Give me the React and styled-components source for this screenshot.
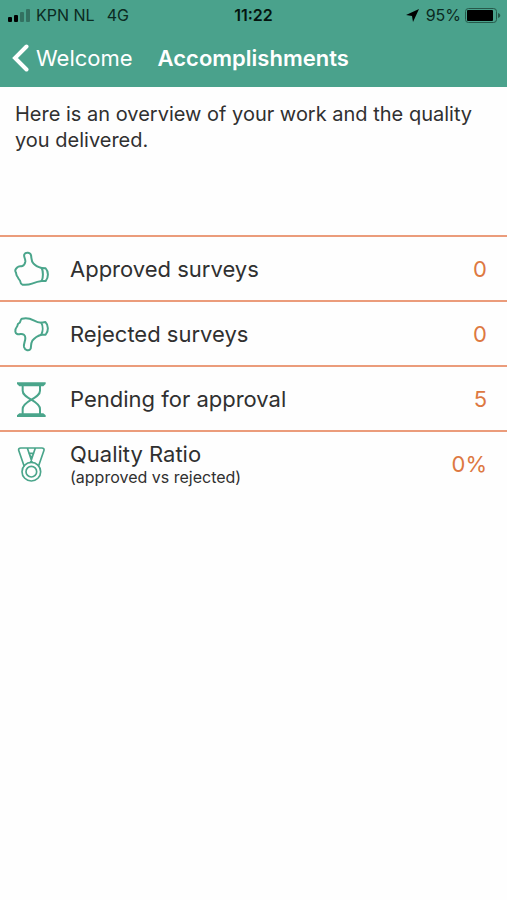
import React from 'react';
import styled, { createGlobalStyle } from 'styled-components';

const GlobalStyle = createGlobalStyle`
  *, *::before, *::after {
    box-sizing: border-box;
  }
  body {
    margin: 0;
    background: #fefefe;
    color: #303030;
    font-family: Inter, "Liberation Sans", sans-serif;
  }
`;

const ThumbUpIcon = () => (
  <Icon viewBox="0 0 108 108" aria-hidden="true">
    <path d="M86 51 C75 48 66 43 61 37 C54 29 56 21 54 13 C53 4 38 2 34 10 C31 17 38 23 37 32 C36 39 34 43 28 45 C22 47 17 45 13 49 C7 53 5 60 9 65 C10 70 10 75 14 78 C16 83 18 86 21 89 C22 95 23 99 28 101 C39 102 49 101 57 98 C67 94 76 91 86 90" />
    <path d="M86 51 C91 61 91 80 86 90 L98 90 C107 80 107 61 98 52 Z" />
  </Icon>
);

const ThumbDownIcon = () => (
  <Icon viewBox="0 0 108 108" aria-hidden="true">
    <path d="M85 20 C76 20 69 17 62 13 C51 7 39 5 27 8 C22 10 23 16 20 20 C16 22 13 25 13 30 C9 35 6 41 7 47 C8 54 15 56 22 54 C31 53 37 57 37 66 C37 76 31 84 33 93 C36 104 49 106 53 98 C55 90 53 82 58 74 C65 65 74 59 85 56" />
    <path d="M85 20 C90 30 90 46 85 56 L98 56 C107 47 107 27 97 18 Z" />
  </Icon>
);

const HourglassIcon = () => (
  <Icon viewBox="0 0 108 108" aria-hidden="true">
    <path d="M29 16 V29 C29 40 38 46 55 56 C72 66 81 73 81 84 V98 M81 16 V29 C81 40 72 46 55 56 C38 66 29 73 29 84 V98" />
    <path fill="currentColor" stroke="none" d="M12 4 H98 V9 L91 16 H19 L12 9 Z M19 97 H91 L98 103 V108 H12 V103 Z" />
  </Icon>
);

const MedalIcon = () => (
  <Icon $thin viewBox="0 0 108 108" aria-hidden="true">
    <circle cx="55" cy="77" r="28" />
    <circle cx="55" cy="77" r="16" />
    <path d="M33 59 L17 13 C16 9 19 6 23 6 H87 C91 6 94 9 93 13 L77 59 M43 6 L57 48 M67 6 L53 48 M48 22 H62 L55 36 Z" />
  </Icon>
);

const stats = [
  { label: 'Approved surveys', value: '0', Symbol: ThumbUpIcon },
  { label: 'Rejected surveys', value: '0', Symbol: ThumbDownIcon },
  { label: 'Pending for approval', value: '5', Symbol: HourglassIcon },
  {
    label: 'Quality Ratio',
    note: '(approved vs rejected)',
    value: '0%',
    Symbol: MedalIcon,
  },
];

const StatusBar = () => (
  <StatusWrapper>
    <Carrier>
      <SignalIcon viewBox="0 0 24 13" aria-hidden="true">
        <rect x="0" y="8" width="4" height="5" rx="1" />
        <rect x="6" y="6" width="4" height="7" rx="1" />
        <rect x="12" y="3" width="4" height="10" rx="1" opacity="0.3" />
        <rect x="18" y="0" width="4" height="13" rx="1" opacity="0.3" />
      </SignalIcon>
      <span>KPN NL</span>
      <Network>4G</Network>
    </Carrier>
    <Clock>11:22</Clock>
    <Power>
      <LocationIcon viewBox="0 0 13 13" aria-hidden="true">
        <path d="M13 0 L7 13 L6 7 L0 6 Z" />
      </LocationIcon>
      <span>95%</span>
      <BatteryIcon viewBox="0 0 36 15" aria-hidden="true">
        <rect x="0.5" y="0.5" width="31" height="14" rx="3" fill="none" stroke="#26594a" />
        <rect x="2" y="2" width="26" height="11" rx="1" />
        <path d="M33 5 C36 6 36 9 33 10 Z" fill="#26594a" />
      </BatteryIcon>
    </Power>
  </StatusWrapper>
);

const App = () => (
  <>
    <GlobalStyle />
    <Header>
      <StatusBar />
      <Navbar>
        <BackLink href="#welcome">
          <BackIcon viewBox="0 0 17 28" aria-hidden="true">
            <path d="M14.5 2.5 L3 14 L14.5 25.5" />
          </BackIcon>
          Welcome
        </BackLink>
        <Title>Accomplishments</Title>
      </Navbar>
    </Header>
    <main>
      <Intro>Here is an overview of your work and the quality you delivered.</Intro>
      <StatList>
        {stats.map(({ label, note, value, Symbol }) => (
          <StatRow key={label}>
            <Symbol />
            <Label>
              {label}
              {note && <Note>{note}</Note>}
            </Label>
            <Value>{value}</Value>
          </StatRow>
        ))}
      </StatList>
    </main>
  </>
);

const Header = styled.header`
  background: #4aa28c;
`;

const StatusWrapper = styled.div`
  display: grid;
  grid-template-columns: 1fr auto 1fr;
  align-items: center;
  height: 30px;
  padding: 0 8px;
  color: #0b2a21;
  font-size: 16px;
  line-height: 20px;
`;

const Carrier = styled.div`
  display: flex;
  align-items: center;
  gap: 4px;
`;

const Network = styled.span`
  margin-left: 8px;
`;

const Clock = styled.time`
  color: #04150f;
  font-weight: 600;
`;

const Power = styled.div`
  display: flex;
  align-items: center;
  justify-content: flex-end;
  gap: 4px;
`;

const SignalIcon = styled.svg`
  width: 24px;
  height: 13px;
  fill: #000;
`;

const LocationIcon = styled.svg`
  width: 13px;
  height: 13px;
  margin-right: 3px;
  fill: #000;
`;

const BatteryIcon = styled.svg`
  width: 36px;
  height: 15px;
  margin-right: -2px;
  fill: #000;
`;

const Navbar = styled.nav`
  display: flex;
  align-items: center;
  gap: 25px;
  height: 57px;
  padding: 0 12px 2px;
  color: #fff;
  font-size: 22px;
  line-height: 28px;
`;

const BackLink = styled.a`
  display: flex;
  align-items: center;
  gap: 7px;
  color: inherit;
  text-decoration: none;
`;

const BackIcon = styled.svg`
  width: 17px;
  height: 28px;
  fill: none;
  stroke: currentColor;
  stroke-width: 4;
  stroke-linecap: round;
`;

const Title = styled.h1`
  margin: 0;
  font-size: 22px;
  font-weight: 600;
`;

const Intro = styled.p`
  min-height: 148px;
  margin: 0;
  padding: 14px 15px;
  font-size: 20px;
  line-height: 26px;
`;

const StatList = styled.ul`
  margin: 0;
  padding: 0;
  list-style: none;
`;

const StatRow = styled.li`
  display: flex;
  align-items: center;
  min-height: 65px;
  padding: 0 20px 0 13px;
  border-top: 2px solid #eb9c7b;
`;

const Icon = styled.svg`
  flex: none;
  width: 36px;
  height: 36px;
  color: #4aa58b;
  fill: none;
  stroke: currentColor;
  stroke-width: ${({ $thin }) => ($thin ? 5 : 6)};
  stroke-linecap: round;
  stroke-linejoin: round;
`;

const Label = styled.div`
  flex: 1;
  margin-left: 21px;
  font-size: 22px;
  line-height: 26px;
`;

const Note = styled.small`
  display: block;
  font-size: 16px;
  line-height: 20px;
`;

const Value = styled.span`
  color: #dd7841;
  font-size: 22px;
  line-height: 26px;
`;

export default App;
